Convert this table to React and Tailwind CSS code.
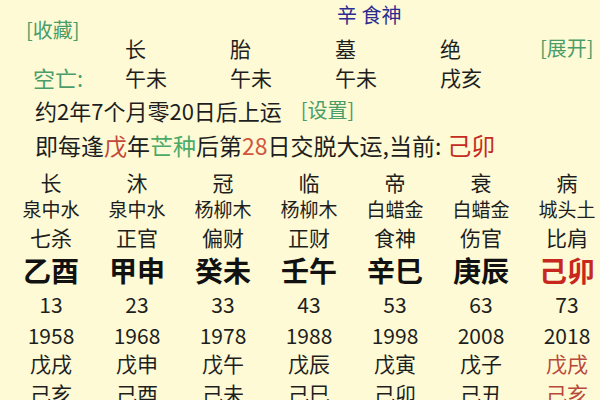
import React from 'react';

const cols = [
  { s: '长', ny: '泉中水', sh: '七杀', gz: '乙酉', age: '13', year: '1958', a: '戊戌', b: '己亥' },
  { s: '沐', ny: '泉中水', sh: '正官', gz: '甲申', age: '23', year: '1968', a: '戊申', b: '己酉' },
  { s: '冠', ny: '杨柳木', sh: '偏财', gz: '癸未', age: '33', year: '1978', a: '戊午', b: '己未' },
  { s: '临', ny: '杨柳木', sh: '正财', gz: '壬午', age: '43', year: '1988', a: '戊辰', b: '己巳' },
  { s: '帝', ny: '白蜡金', sh: '食神', gz: '辛巳', age: '53', year: '1998', a: '戊寅', b: '己卯' },
  { s: '衰', ny: '白蜡金', sh: '伤官', gz: '庚辰', age: '63', year: '2008', a: '戊子', b: '己丑' },
  { s: '病', ny: '城头土', sh: '比肩', gz: '己卯', age: '73', year: '2018', a: '戊戌', b: '己亥', current: true },
];

const font = { fontFamily: '"Noto Sans CJK SC", "Noto Sans", sans-serif' };

function Row({ h, cls, field, hot }) {
  return (
    <div className={`grid grid-cols-[repeat(7,86px)] pl-[8px] ${h}`}>
      {cols.map((c, i) => (
        <div key={i} className={`text-center whitespace-nowrap ${cls} ${c.current ? hot : ''}`}>
          {c[field]}
        </div>
      ))}
    </div>
  );
}

export default function App() {
  return (
    <div className="w-[600px] h-[400px] overflow-hidden bg-[#fdfad5] text-[#1e1e1e]" style={font}>
      {/* top block */}
      <div className="flex h-[36px] items-start">
        <div className="ml-[26px] mt-[20px] w-[311px] text-[20px] leading-[20px] text-[#4a9d68]">[收藏]</div>
        <div className="mt-[5px] text-[20px] leading-[20px] text-[#2c2c90]">辛 食神</div>
      </div>

      <div className="grid grid-cols-[92px_repeat(4,105px)_auto] pl-[33px] h-[24px] text-[21px] leading-[24px]">
        <div />
        <div>长</div>
        <div>胎</div>
        <div>墓</div>
        <div>绝</div>
        <div className="-ml-[5px] text-[20px] text-[#4a9d68]">[展开]</div>
      </div>

      <div className="grid grid-cols-[92px_repeat(4,105px)] pl-[33px] h-[34px] text-[21px] leading-[34px]">
        <div className="text-[22px] text-[#4a9d68]">空亡:</div>
        <div>午未</div>
        <div>午未</div>
        <div>午未</div>
        <div>戌亥</div>
      </div>

      <div className="flex items-center h-[32px] pl-[35px]">
        <span className="text-[22px] leading-[32px]">约2年7个月零20日后上运</span>
        <span className="ml-[19px] text-[20px] leading-[32px] text-[#4a9d68]">[设置]</span>
      </div>

      <div className="flex items-center h-[38px] pl-[35px] text-[23px] leading-[38px] whitespace-nowrap">
        <span>即每逢</span>
        <span className="text-[#c4473a]">戊</span>
        <span>年</span>
        <span className="text-[#4caa68]">芒种</span>
        <span>后第</span>
        <span className="text-[#d0563e]">28</span>
        <span>日交脱大运,当前: </span>
        <span className="ml-[6px] text-[24px] text-[#c62b22]">己卯</span>
      </div>

      {/* luck pillars */}
      <div className="mt-[5px]">
        <Row h="h-[26px]" cls="text-[21px] leading-[26px]" field="s" />
        <Row h="h-[27px]" cls="text-[19px] leading-[27px]" field="ny" />
        <Row h="h-[31px]" cls="text-[21px] leading-[31px]" field="sh" />
        <Row h="h-[34px]" cls="text-[28px] leading-[34px] font-bold text-[#111]" field="gz" hot="text-[#c8271e]" />
        <Row h="h-[34px]" cls="text-[21px] leading-[34px]" field="age" />
        <Row h="h-[28px]" cls="text-[21px] leading-[28px]" field="year" />
        <Row h="h-[28px]" cls="text-[21px] leading-[28px]" field="a" hot="text-[#b9493b]" />
        <Row h="h-[32px]" cls="text-[21px] leading-[32px]" field="b" hot="text-[#b9493b]" />
      </div>
    </div>
  );
}
